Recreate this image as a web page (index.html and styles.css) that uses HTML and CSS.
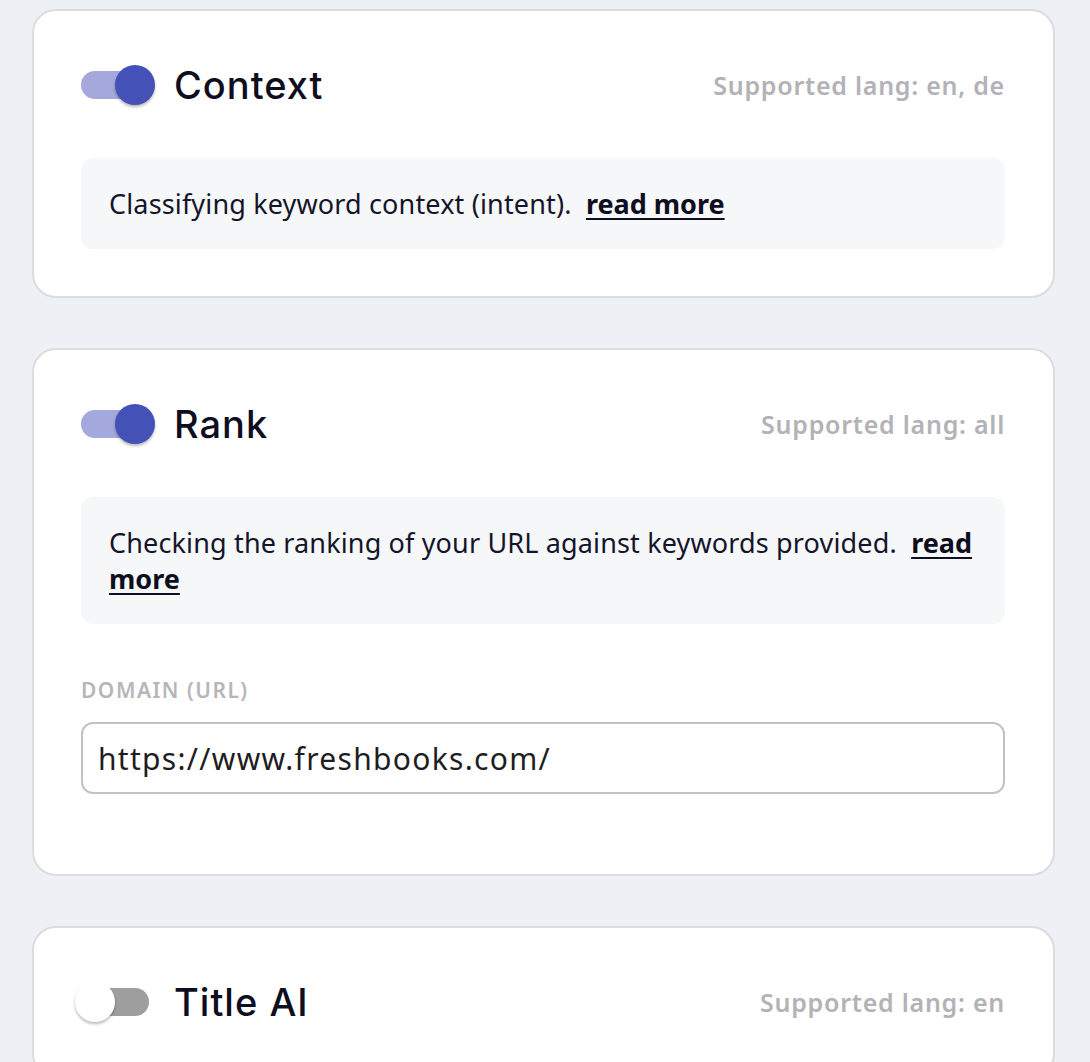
FILE: index.html
```html
<!DOCTYPE html>
<html lang="en">
<head>
<meta charset="utf-8">
<title>Features</title>
<link rel="stylesheet" href="styles.css">
</head>
<body>
<main class="list">
  <section class="card">
    <div class="card-head">
      <div class="switch on"><span class="knob"></span></div>
      <h2 class="title">Context</h2>
      <span class="lang">Supported lang: en, de</span>
    </div>
    <p class="info">Classifying keyword context (intent).&nbsp; <a href="#" class="more">read more</a></p>
  </section>

  <section class="card">
    <div class="card-head">
      <div class="switch on"><span class="knob"></span></div>
      <h2 class="title">Rank</h2>
      <span class="lang">Supported lang: all</span>
    </div>
    <p class="info">Checking the ranking of your URL against keywords provided.&nbsp; <a href="#" class="more">read more</a></p>
    <label class="field-label" for="domain">DOMAIN (URL)</label>
    <input id="domain" class="field-input" type="text" value="https://www.freshbooks.com/">
  </section>

  <section class="card">
    <div class="card-head">
      <div class="switch off"><span class="knob"></span></div>
      <h2 class="title">Title AI</h2>
      <span class="lang">Supported lang: en</span>
    </div>
  </section>
</main>
</body>
</html>
```
FILE: styles.css
```css
html, body {
  margin: 0;
  padding: 0;
  background: #edf0f5;
}
body {
  font-family: "Noto Sans", "Open Sans", sans-serif;
  color: #14142a;
}
.list {
  display: flex;
  flex-direction: column;
  gap: 50px;
  padding: 9px 35px 40px 32px;
}
.card {
  background: #fff;
  border: 2px solid #dcdcdf;
  border-radius: 24px;
  padding: 47px 48px 47px 47px;
  display: flex;
  flex-direction: column;
}
.card-head {
  display: flex;
  align-items: center;
  height: 54px;
}
.switch {
  position: relative;
  width: 68px;
  height: 28px;
  border-radius: 14px;
  flex: none;
}
.switch.on { background: #a4a8dc; }
.switch.off { background: #9e9e9e; }
.knob {
  position: absolute;
  top: -6px;
  width: 40px;
  height: 40px;
  border-radius: 50%;
  box-shadow: 0 2px 3px rgba(0,0,0,0.28);
}
.switch.on .knob { left: 34px; background: #4451b7; }
.switch.off .knob { left: -6px; background: #fff; }
.title {
  margin: 0 0 0 25px;
  font-family: Inter, "Noto Sans", sans-serif;
  font-weight: 500;
  font-size: 38px;
  letter-spacing: 1px;
  color: #0e0e20;
  flex: 1;
}
.lang {
  font-size: 25px;
  font-weight: 600;
  letter-spacing: 0.75px;
  color: #b2b2b7;
}
.info {
  margin: 46px 0 0;
  background: #f6f7f9;
  border-radius: 12px;
  padding: 28px 28px 27px 28px;
  font-size: 27px;
  line-height: 36px;
  letter-spacing: 0.15px;
  color: #15152a;
}
.more {
  color: #0e0e20;
  font-weight: 700;
  letter-spacing: 0;
  text-decoration: underline;
  text-underline-offset: 4px;
}
.field-label {
  margin-top: 54px;
  font-size: 21px;
  line-height: 24px;
  font-weight: 600;
  letter-spacing: 1.5px;
  color: #b6b6ba;
}
.field-input {
  margin: 20px 0 33px;
  height: 72px;
  box-sizing: border-box;
  border: 2px solid #c2c2c6;
  border-radius: 12px;
  padding: 0 15px;
  font-family: "Noto Sans", sans-serif;
  font-size: 30px;
  letter-spacing: 1.3px;
  color: #1e1e22;
  background: #fff;
  outline: none;
}
```
